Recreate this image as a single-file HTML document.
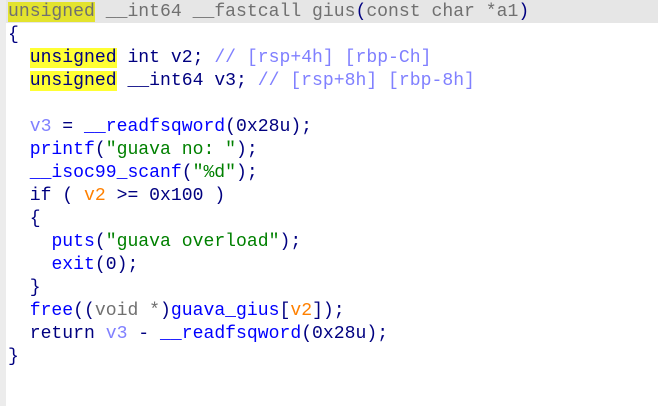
<!DOCTYPE html>
<html><head><meta charset="utf-8"><style>
html,body{margin:0;padding:0;width:658px;height:406px;overflow:hidden;background:#fff}
.strip{position:absolute;left:0;top:0;width:6px;height:406px;background:#ececec}
pre{position:absolute;left:8px;top:0.5px;margin:0;font-family:"Liberation Mono",monospace;font-size:18.1px;line-height:23px;color:#000080;white-space:pre}
.l1{position:absolute;left:6px;top:0;width:652px;height:23px;background:#e6e6e6}
.g{color:#707070}
.hl{background:#ffff33}
.hg{background:#e3e32e}
.c{color:#8080ff}
.f{color:#0000ff}
.s{color:#008000}
.o{color:#ff8000}
.v{color:#8080ff}
</style></head><body>
<div class="strip"></div><div class="l1"></div>
<pre><span class="g"><span class="hg">unsigned</span> __int64 __fastcall gius</span>(<span class="g">const char *a1</span>)
{
  <span class="hl">unsigned</span> int v2; <span class="c">// [rsp+4h] [rbp-Ch]</span>
  <span class="hl">unsigned</span> __int64 v3; <span class="c">// [rsp+8h] [rbp-8h]</span>

  <span class="v">v3</span> = <span class="f">__readfsqword</span>(0x28u);
  <span class="f">printf</span>(<span class="s">"guava no: "</span>);
  <span class="f">__isoc99_scanf</span>(<span class="s">"%d"</span>);
  if ( <span class="o">v2</span> &gt;= 0x100 )
  {
    <span class="f">puts</span>(<span class="s">"guava overload"</span>);
    <span class="f">exit</span>(0);
  }
  <span class="f">free</span>((<span class="g">void *</span>)<span class="f">guava_gius</span>[<span class="o">v2</span>]);
  return <span class="v">v3</span> - <span class="f">__readfsqword</span>(0x28u);
}</pre>
</body></html>
